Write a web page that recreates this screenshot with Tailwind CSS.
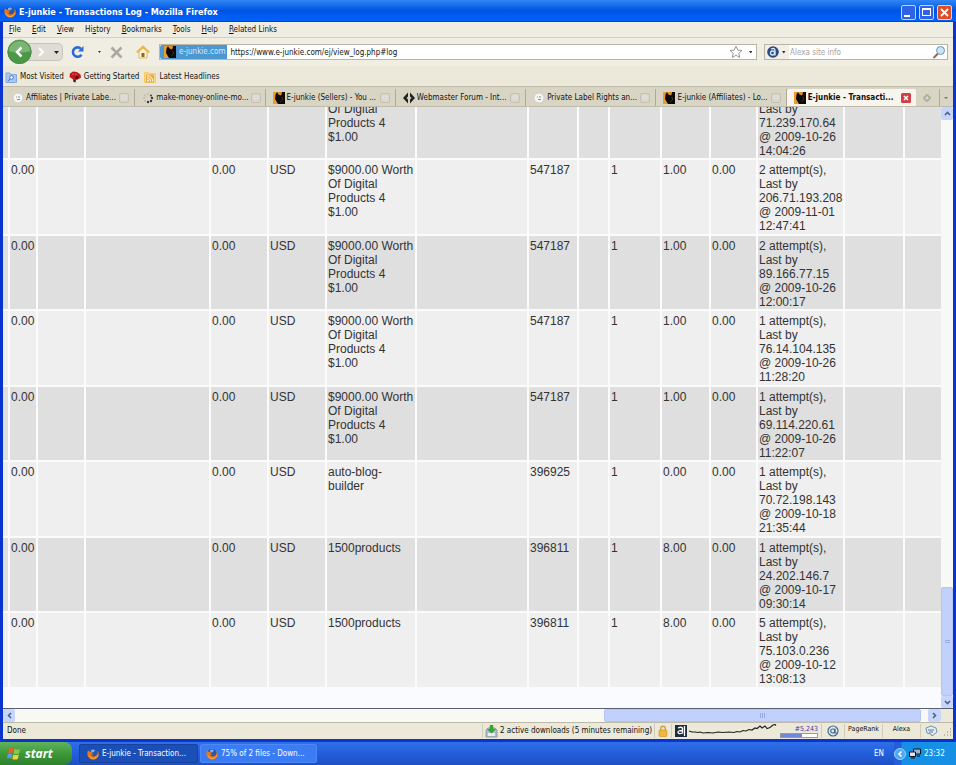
<!DOCTYPE html>
<html lang="en">
<head>
  <meta charset="UTF-8">
  <title>E-junkie - Transactions Log - Mozilla Firefox</title>
  <meta name="viewport" content="width=device-width, initial-scale=1.0">
  <script src="https://cdn.jsdelivr.net/npm/@tailwindcss/browser@4"></script>
</head>
<body class="h-screen flex flex-col overflow-hidden bg-[#f9fafb] font-['DejaVu_Sans_Condensed','Liberation_Sans',sans-serif] text-[8px] leading-[12px] text-[#111]">
  <!-- shared icons -->
  <svg class="hidden" aria-hidden="true">
    <symbol id="fox" viewBox="0 0 12 12">
      <circle cx="6" cy="6" r="5" fill="#2b55a8"/>
      <path d="M4 2.2c1.500-.9 3-.7 4 .2L6.500 4.300 4.200 4.500z" fill="#7fb2ea"/>
      <path d="M1 2.200C.2 4 0 6.500 1 8.500c1 2 3 3.200 5.200 3.200 3 0 5.500-2.200 5.600-5.400 0-1.500-.4-2.800-1.300-3.800.3 1.500.2 3-.6 4.300-1 1.500-3 2-4.500 1.200-.8-.4-1-.9-1.100-1.300.9.300 1.500 0 2-.6-.7-.2-1.500-.3-1.700-1-.1-.5.3-.9.800-1.300-.8-.3-1.600-.2-2.200.2C2.300 3.500 1.500 3 1 2.200z" fill="#e8741c"/>
      <path d="M2 7.500c.8 2 2.600 3 4.400 3 2 0 3.800-1.300 4.400-3.200" fill="none" stroke="#f9b63a"/>
    </symbol>
    <symbol id="ej" viewBox="0 0 12 12">
      <path d="M0 0h12v12H0z" fill="#ee9a2c"/>
      <path d="M2.500 2.500L4 0l1.500 2.500L8 3.500 9 0h3v12H5L3.500 9.500 2 7z" fill="#0c0a08"/>
      <path d="M6 0h2.500v2.500L7 3z" fill="#d98a2a"/>
      <path d="M8.500 5q1.500 1 1 3l-2 1.500" fill="none" stroke="#4a3820"/>
    </symbol>
    <symbol id="page" viewBox="0 0 12 12">
      <circle cx="6" cy="6" r="5" fill="#f6f6f4" stroke="#d0cfca"/>
      <path d="M4 5h1M6 5h2M5 7.500h3" stroke="#8c8c8c" fill="none"/>
    </symbol>
    <symbol id="shut" viewBox="0 0 10 10">
      <rect x=".5" y=".5" width="9" height="9" rx="1.500" fill="#d9d6cb" stroke="#c3c0b6"/>
      <path d="M3 3h4v3H3z" fill="none" stroke="#e6e4dc"/>
    </symbol>
  </svg>

  <div class="flex-1 min-h-0 flex flex-col border-x-3 border-b-3 border-[#0a34d0] bg-[#ece9d8]">
    <!-- title bar -->
    <header class="h-[22px] shrink-0 -mx-[3px] px-[4px] pt-[3px] flex items-center gap-[3px] bg-linear-to-b from-[#2f86f2] via-[#0054e3] to-[#0062fb] border-b border-[#0a3fc0]">
      <svg class="w-3 h-3"><use href="#fox"/></svg>
      <h1 class="flex-1 text-[9px] font-bold text-white whitespace-nowrap">E-junkie - Transactions Log - Mozilla Firefox</h1>
      <button aria-label="Minimize" class="w-[15px] h-[15px] rounded-xs border border-[#c3d4fa] bg-[#2f62e4] flex items-end p-[2px]"><span class="w-[6px] h-[2px] bg-white"></span></button>
      <button aria-label="Maximize" class="w-[15px] h-[15px] rounded-xs border border-[#c3d4fa] bg-[#2f62e4] flex items-center justify-center"><span class="w-[9px] h-[8px] border border-t-2 border-white"></span></button>
      <button aria-label="Close" class="w-[15px] h-[15px] rounded-xs border border-[#f3d0c8] bg-[#dd4f2b] flex items-center justify-center">
        <svg class="w-[9px] h-[9px]" viewBox="0 0 9 9"><path d="M1 1l7 7M8 1l-7 7" stroke="#fff" stroke-width="1.800"/></svg>
      </button>
    </header>

    <!-- menu -->
    <nav class="h-[16px] shrink-0 flex items-center gap-[11px] pl-[6px] pt-[1px] bg-[#efece2] border-b border-[#d3d0c2]">
      <a href="#"><u>F</u>ile</a>
      <a href="#"><u>E</u>dit</a>
      <a href="#"><u>V</u>iew</a>
      <a href="#">Hi<u>s</u>tory</a>
      <a href="#"><u>B</u>ookmarks</a>
      <a href="#"><u>T</u>ools</a>
      <a href="#"><u>H</u>elp</a>
      <a href="#"><u>R</u>elated Links</a>
    </nav>

    <!-- navigation -->
    <div class="h-[28px] shrink-0 flex items-center pl-[4px] pr-[5px] bg-[#f0eee2]">
      <button aria-label="Back and forward" class="shrink-0">
        <svg class="w-[56px] h-[26px]" viewBox="0 0 56 26">
          <path d="M12 4.500h38q5.500 0 5.500 5v7q0 5-5.500 5H12z" fill="#dedcd5" stroke="#c5c3ba"/>
          <path d="M32 9l4 4-4 4" fill="none" stroke="#fff" stroke-width="2"/>
          <path d="M47 12h5l-2.500 3z" fill="#222"/>
          <circle cx="12.500" cy="13" r="12" fill="#4a9a45"/>
          <path d="M1 12a11.500 11.500 0 0 1 23 0q-11 3-23 0z" fill="#79b573"/>
          <circle cx="12.500" cy="13" r="11.500" fill="none" stroke="#4f8a4d"/>
          <path d="M14.500 8.500L10 13l4.500 4.500" fill="none" stroke="#fff" stroke-width="2.500"/>
        </svg>
      </button>
      <button aria-label="Reload" class="ml-[7px] shrink-0">
        <svg class="w-[32px] h-[14px]" viewBox="0 0 32 14">
          <path d="M11.500 9.800A4.700 4.700 0 1 1 11 3.800" fill="none" stroke="#2c6bd4" stroke-width="2.600"/>
          <path d="M13.500 1v5.500H8z" fill="#2c6bd4"/>
          <path d="M28 6h3l-1.500 2z" fill="#333"/>
        </svg>
      </button>
      <button aria-label="Stop" class="ml-[8px] shrink-0">
        <svg class="w-[13px] h-[13px]" viewBox="0 0 13 13"><path d="M1.500 1.500l10 10M11.500 1.500l-10 10" stroke="#aaa9a4" stroke-width="2.600"/></svg>
      </button>
      <button aria-label="Home" class="ml-[13px] shrink-0">
        <svg class="w-[14px] h-[14px]" viewBox="0 0 14 14">
          <path d="M3 6.500v6.500h8V6.500L7 3z" fill="#fdf6dc" stroke="#e0b765"/>
          <path d="M.8 7.500L7 1.500l6.200 6" fill="none" stroke="#efb73e" stroke-width="1.800"/>
          <path d="M5.500 8h3v4h-3z" fill="#8a6428"/>
        </svg>
      </button>
      <div class="ml-[9px] flex-1 h-[16px] flex items-center bg-white border border-[#b9b6a6] pr-[4px]">
        <span class="h-full shrink-0 flex items-center gap-[3px] pl-[4px] pr-[2px] bg-[#4a97d2] text-[#d8ecfb] rounded-l-xs">
          <svg class="w-3 h-3"><use href="#ej"/></svg>e-junkie.com
        </span>
        <input aria-label="Location" value="https://www.e-junkie.com/ej/view_log.php#log" class="flex-1 min-w-0 pl-[3px] pt-[1px] outline-none">
        <svg class="w-[24px] h-[14px] shrink-0" viewBox="0 0 24 14">
          <path d="M8 1.200l1.800 3.900 4.200.4-3.200 2.800 1 4.200L8 10.300l-3.800 2.200 1-4.200L2 5.500l4.200-.4z" fill="#fff" stroke="#8c8c8c" stroke-width=".9"/>
          <path d="M21 6h3.500l-1.800 2.500z" fill="#333"/>
        </svg>
      </div>
      <div class="ml-[7px] w-[184px] shrink-0 h-[16px] flex items-center bg-white border border-[#b9b6a6] pr-[1px]">
        <svg class="w-[24px] h-[14px] shrink-0 bg-[#f1efe6]" viewBox="0 0 24 14">
          <circle cx="8" cy="7" r="5.800" fill="#2a4a84"/>
          <circle cx="7.500" cy="8" r="2" fill="none" stroke="#dfe8f6" stroke-width="1.300"/>
          <path d="M6 4q4-1.500 4 1.500v5" fill="none" stroke="#dfe8f6" stroke-width="1.300"/>
          <path d="M17 6h3.500l-1.700 2.500z" fill="#333"/>
        </svg>
        <input aria-label="Search" placeholder="Alexa site info" class="flex-1 min-w-0 pl-[1px] pt-[1px] outline-none placeholder:text-[#a3a3a3]">
        <svg class="w-[14px] h-[14px] shrink-0" viewBox="0 0 14 14">
          <path d="M6 8.500L1.500 13" stroke="#8c6a4c" stroke-width="2"/>
          <circle cx="8.500" cy="5.500" r="4" fill="#c9e5f8" stroke="#6c93b8"/>
        </svg>
      </div>
    </div>

    <!-- bookmarks -->
    <div class="h-[20px] shrink-0 flex items-center gap-[5px] pl-[2px] pt-[2px] bg-[#ece9db]">
      <a href="#" class="flex items-center gap-[3px]">
        <svg class="w-[12px] h-[12px]" viewBox="0 0 12 12"><path d="M1 2h4l1 1.500h5.500v8H1z" fill="#a9c6f2" stroke="#86a8e0"/><circle cx="6.500" cy="6.500" r="1.800" fill="#fff" stroke="#4c74bd"/><path d="M5 8l-2 2" stroke="#4c74bd"/></svg>
        Most Visited
      </a>
      <a href="#" class="flex items-center gap-[3px]">
        <svg class="w-[12px] h-[12px]" viewBox="0 0 12 12"><path d="M1 2.500L4 .5l4 .5 3.500 2.500.5 3L9 8.500 6 9 3.500 8 .5 6z" fill="#c0161c"/><path d="M7 5l3 .5L8.500 8 6 8z" fill="#5c0a0c"/><path d="M4 8l3 1-.5 2.500-2-.5z" fill="#3a2020"/><path d="M3 3l2 .5M6 3l2 .5" stroke="#e2565a"/></svg>
        Getting Started
      </a>
      <a href="#" class="flex items-center gap-[3px]">
        <svg class="w-[12px] h-[12px]" viewBox="0 0 12 12"><path d="M.5 1.500h4l1 1h6v9H.5z" fill="#f8d984" stroke="#f0cd70"/><path d="M2 3.500h8v8H2z" fill="#f0a93a"/><circle cx="4" cy="9.500" r="1" fill="#fff"/><path d="M3 7a3 3 0 0 1 3.500 3.500M3 4.800a5.200 5.200 0 0 1 5.700 5.700" fill="none" stroke="#fff"/></svg>
        Latest Headlines
      </a>
    </div>

    <!-- tabs -->
    <div class="h-[21px] shrink-0 flex items-stretch pl-[2px] pt-[2px] bg-[#d9d5c5] border-y border-[#bfbbaa]">
      <button class="flex-1 min-w-0 flex items-center gap-[2px] pl-[7px] pr-[5px] border-r border-[#aeaa9b]">
        <svg class="w-3 h-3 shrink-0"><use href="#page"/></svg><span class="flex-1 text-left whitespace-nowrap">Affiliates | Private Labe...</span><svg class="w-[10px] h-[10px] shrink-0"><use href="#shut"/></svg>
      </button>
      <button class="flex-1 min-w-0 flex items-center gap-[2px] pl-[7px] pr-[5px] border-r border-[#aeaa9b]">
        <svg class="w-3 h-3 shrink-0" viewBox="0 0 12 12"><g fill="#bdb9ab"><circle cx="6" cy="2" r="1"/><circle cx="3" cy="3.500" r="1"/><circle cx="2" cy="6" r="1"/><circle cx="3" cy="9" r="1"/></g><g fill="#3c3a35"><circle cx="9" cy="3.500" r="1"/><circle cx="10" cy="6" r="1.200"/><circle cx="9" cy="9" r="1.200"/><circle cx="6" cy="10" r="1.200"/></g></svg><span class="flex-1 text-left whitespace-nowrap">make-money-online-mo...</span><svg class="w-[10px] h-[10px] shrink-0"><use href="#shut"/></svg>
      </button>
      <button class="flex-1 min-w-0 flex items-center gap-[2px] pl-[7px] pr-[5px] border-r border-[#aeaa9b]">
        <svg class="w-3 h-3 shrink-0"><use href="#ej"/></svg><span class="flex-1 text-left whitespace-nowrap">E-junkie (Sellers) - You ...</span><svg class="w-[10px] h-[10px] shrink-0"><use href="#shut"/></svg>
      </button>
      <button class="flex-1 min-w-0 flex items-center gap-[2px] pl-[7px] pr-[5px] border-r border-[#aeaa9b]">
        <svg class="w-3 h-3 shrink-0" viewBox="0 0 12 12"><path d="M5 .5v11L0 6zM7 .5v11L12 6z" fill="#222"/><path d="M6 3.500L8.500 6 6 8.500 3.500 6z" fill="#d9d5c5"/></svg><span class="flex-1 text-left whitespace-nowrap">Webmaster Forum - Int...</span><svg class="w-[10px] h-[10px] shrink-0"><use href="#shut"/></svg>
      </button>
      <button class="flex-1 min-w-0 flex items-center gap-[2px] pl-[7px] pr-[5px] border-r border-[#aeaa9b]">
        <svg class="w-3 h-3 shrink-0"><use href="#page"/></svg><span class="flex-1 text-left whitespace-nowrap">Private Label Rights an...</span><svg class="w-[10px] h-[10px] shrink-0"><use href="#shut"/></svg>
      </button>
      <button class="flex-1 min-w-0 flex items-center gap-[2px] pl-[7px] pr-[5px] border-r border-[#aeaa9b]">
        <svg class="w-3 h-3 shrink-0"><use href="#ej"/></svg><span class="flex-1 text-left whitespace-nowrap">E-junkie (Affiliates) - Lo...</span><svg class="w-[10px] h-[10px] shrink-0"><use href="#shut"/></svg>
      </button>
      <button class="flex-1 min-w-0 flex items-center gap-[2px] pl-[7px] pr-[5px] rounded-t-xs bg-[#f7f5ee] font-bold">
        <svg class="w-3 h-3 shrink-0"><use href="#ej"/></svg><span class="flex-1 text-left whitespace-nowrap">E-junkie - Transacti...</span>
        <svg class="w-[10px] h-[10px] shrink-0" viewBox="0 0 10 10"><rect width="10" height="10" rx="1.500" fill="#cf3f45"/><path d="M3 3l4 4M7 3l-4 4" stroke="#fff" stroke-width="1.500"/></svg>
      </button>
      <button aria-label="New tab" class="w-[24px] flex items-center justify-center border-r border-[#aeaa9b]">
        <svg class="w-[8px] h-[8px]" viewBox="0 0 8 8"><path d="M4 .5v7M.5 4h7" stroke="#99968a" stroke-width="3"/><path d="M4 1.500v5M1.500 4h5" stroke="#eeece4"/></svg>
      </button>
      <button aria-label="List all tabs" class="w-[13px] flex items-center justify-center">
        <svg class="w-[6px] h-[4px]" viewBox="0 0 6 4"><path d="M1 1h4L3 3z" fill="#77746a"/></svg>
      </button>
    </div>

    <!-- page, scrolled to its end -->
    <div class="flex-1 min-h-0 flex">
      <main class="flex-1 min-w-0 flex flex-col justify-end overflow-hidden bg-[#f9fbfe] pb-[19px]">
        <table class="w-full table-fixed border-separate border-spacing-0 bg-[#fbfbfb] font-['Liberation_Sans',Arial,sans-serif] text-[12px] leading-[14px] text-[#333]">
          <colgroup>
            <col class="w-[7px]"><col class="w-[28px]"><col class="w-[48px]"><col class="w-[125px]">
            <col class="w-[58px]"><col class="w-[58px]"><col class="w-[90px]"><col class="w-[112px]">
            <col class="w-[50px]"><col class="w-[31px]"><col class="w-[52px]"><col class="w-[49px]">
            <col class="w-[47px]"><col class="w-[87px]"><col class="w-[60px]"><col>
          </colgroup>
          <tbody id="log"></tbody>
        </table>
      </main>
      <div class="w-[12px] shrink-0 flex flex-col bg-[#f8f8f4]">
        <button aria-label="Scroll up" class="h-[13px] flex items-center justify-center bg-[#c6d5fb] rounded-xs"><svg class="w-[7px] h-[5px]" viewBox="0 0 7 5"><path d="M1 4l2.500-2.500L6 4" fill="none" stroke="#4d6185" stroke-width="1.600"/></svg></button>
        <div class="flex-1"></div>
        <div class="h-[109px] bg-[#c2d1fc] border border-[#b3c5f5] rounded-xs flex flex-col items-center justify-center gap-px"><i class="w-[5px] h-px bg-[#93abe8]"></i><i class="w-[5px] h-px bg-[#93abe8]"></i></div>
        <button aria-label="Scroll down" class="h-[12px] flex items-center justify-center bg-[#c6d5fb] rounded-xs"><svg class="w-[7px] h-[5px]" viewBox="0 0 7 5"><path d="M1 1l2.500 2.500L6 1" fill="none" stroke="#4d6185" stroke-width="1.600"/></svg></button>
      </div>
    </div>

    <div class="h-[14px] shrink-0 flex border-t border-[#59606e] bg-[#f9f9f3]">
      <button aria-label="Scroll left" class="w-[12px] flex items-center justify-center bg-[#c6d5fb] rounded-xs"><svg class="w-[5px] h-[7px]" viewBox="0 0 5 7"><path d="M4 1L1.500 3.500 4 6" fill="none" stroke="#4d6185" stroke-width="1.600"/></svg></button>
      <div class="flex-1"></div>
      <div class="w-1/3 bg-[#c2d1fc] border border-[#b3c5f5] rounded-xs flex items-center justify-center gap-px"><i class="h-[5px] w-px bg-[#93abe8]"></i><i class="h-[5px] w-px bg-[#93abe8]"></i><i class="h-[5px] w-px bg-[#93abe8]"></i></div>
      <button aria-label="Scroll right" class="ml-[7px] w-[13px] flex items-center justify-center bg-[#c6d5fb] rounded-xs"><svg class="w-[5px] h-[7px]" viewBox="0 0 5 7"><path d="M1 1l2.500 2.500L1 6" fill="none" stroke="#4d6185" stroke-width="1.600"/></svg></button>
      <span class="w-[12px] bg-[#ece9d8]"></span>
    </div>

    <!-- status bar -->
    <footer class="h-[17px] shrink-0 flex items-center pl-[4px] border-t border-[#bcb9aa] bg-[#ece9d8] whitespace-nowrap">
      <span class="flex-1">Done</span>
      <div class="flex items-center gap-[2px] h-[14px] px-[2px] border-l border-[#cfccbc]">
        <svg class="w-[13px] h-[13px]" viewBox="0 0 13 13"><path d="M1 5l2-2h7l2 2v7H1z" fill="#aebccb" stroke="#8f9cac"/><path d="M3 8h7v3H3z" fill="#e8eef5"/><path d="M4.800 0h3.400v4H11L6.500 8.500 2 4h2.800z" fill="#37a52e"/></svg>
        <span>2 active downloads (5 minutes remaining)</span>
      </div>
      <div class="flex items-center h-[14px] px-[3px] border-x border-[#cfccbc]">
        <svg class="w-[10px] h-[12px]" viewBox="0 0 10 12"><path d="M2.700 6V3.500a2.300 2.300 0 0 1 4.600 0V6" fill="none" stroke="#c9a24a" stroke-width="1.400"/><rect x="1" y="5" width="8" height="6.500" rx="1" fill="#f0b63e" stroke="#c98f26" stroke-width=".6"/></svg>
      </div>
      <svg class="ml-[3px] w-[104px] h-[14px]" viewBox="0 0 104 14">
        <path d="M0 1h12v12H0z" fill="#1f2c40"/>
        <path d="M3 4q3-1.500 4.500 0v5q-4 1.500-4.500-.5t4.500-2M9.500 2v10" fill="none" stroke="#fff" stroke-width="1.300"/>
        <path d="M14 7l3 1h3l3 .5 2-.5 3 1 5-.5 5 .5 5-1 5 .5 6-.5 5 .5 3-1 3 .500 3-1.500 3 .500 3-1.500 3 .500 3-2 2 .500 3-2.500 2 2 3-2 2 2.500 3-1 3-2.500 2-.5 1 1" fill="none" stroke="#222" stroke-width="1.200"/>
      </svg>
      <div class="w-[40px] flex flex-col items-end pr-[1px] leading-[8px] text-[7px] text-[#2c3fa8]">
        <a href="#">#5,243</a>
        <span class="w-[38px] h-[5px] border border-[#9c9a90] bg-white"><i class="block h-full w-[21px] bg-[#7288dd]"></i></span>
      </div>
      <div class="ml-[2px] px-[5px] h-[14px] flex items-center border-x border-[#cfccbc]">
        <svg class="w-[12px] h-[12px]" viewBox="0 0 12 12"><circle cx="6" cy="6" r="5" fill="#dfe8ef" stroke="#426a8c" stroke-width="1.200"/><circle cx="5.700" cy="6" r="2" fill="none" stroke="#426a8c" stroke-width="1.200"/><path d="M8 3.500v4.500h2" fill="none" stroke="#426a8c" stroke-width="1.200"/></svg>
      </div>
      <span class="h-[14px] px-[3px] text-[7px] leading-[11px] border-r border-[#cfccbc]">PageRank</span>
      <span class="h-[14px] w-[38px] text-center text-[7px] leading-[11px] border-r border-[#cfccbc]">Alexa</span>
      <svg class="ml-[4px] w-[28px] h-[14px]" viewBox="0 0 28 14">
        <path d="M1 4l5-2 5 2 1 4-5 4-1-2-4-1z" fill="#e3edf5" stroke="#7191b0"/><path d="M3 6h6M4 8h4" stroke="#55789c"/>
        <path d="M25 5h1M25 8h1M25 11h1M22 8h1M22 11h1M19 11h1" stroke="#aaa798" stroke-width="1.500"/>
      </svg>
    </footer>
  </div>

  <!-- taskbar -->
  <div class="h-[23px] shrink-0 flex items-stretch text-white bg-linear-to-b from-[#2f6fe8] via-[#245edb] to-[#1e50c4] whitespace-nowrap">
    <button class="w-[72px] flex items-center gap-[4px] pl-[7px] rounded-r-lg bg-linear-to-b from-[#62b25e] via-[#3c9838] to-[#2f802d] font-['Open_Sans','Liberation_Sans',sans-serif] text-[12px] font-bold italic">
      <svg class="w-[14px] h-[13px]" viewBox="0 0 14 13"><path d="M2 1.500q2.500-1.500 4.500 0L5.500 6Q3.500 4.800 1 6z" fill="#e8602c"/><path d="M7.500 2q2.500 1.200 5.500 0l-1 4.500q-3 1.200-5.500 0z" fill="#8cc94a"/><path d="M.8 7q2.500-1.200 4.500 0l-1 4.500q-2-1.200-4.300 0z" fill="#5b9bea"/><path d="M6.300 7.500q2.500 1.200 5.500 0l-1 4.500q-3 1.200-5.500 0z" fill="#f7cf3c"/></svg>
      start
    </button>
    <button class="ml-[7px] my-[2px] w-[119px] flex items-center gap-[3px] pl-[7px] rounded-xs bg-[#1b4fb8] border border-[#1841a0]">
      <svg class="w-3 h-3 shrink-0"><use href="#fox"/></svg>E-junkie - Transaction...
    </button>
    <button class="ml-[2px] my-[2px] w-[117px] flex items-center gap-[3px] pl-[5px] rounded-xs bg-[#3b7bf3] border border-[#4c88f6]">
      <svg class="w-3 h-3 shrink-0"><use href="#fox"/></svg>75% of 2 files - Down...
    </button>
    <div class="flex-1"></div>
    <span class="self-center mr-[10px]">EN</span>
    <div class="w-[62px] flex items-center gap-[3px] bg-linear-to-r from-[#245edb] from-[7px] to-[#1590e4] to-[8px]">
      <svg class="w-[12px] h-[12px]" viewBox="0 0 12 12"><circle cx="6" cy="6" r="5.500" fill="#4fa9f4" stroke="#9fd2fb"/><path d="M7.500 3.500L5 6l2.500 2.500" fill="none" stroke="#fff" stroke-width="1.600"/></svg>
      <svg class="w-[12px] h-[11px]" viewBox="0 0 12 11"><path d="M4.500 1h7v5h-7z" fill="#9bb4d4" stroke="#111"/><path d="M.5 4h6v4.500h-6z" fill="#dce6f2" stroke="#111"/><path d="M2 10h4M8 8h3" stroke="#111"/></svg>
      <time>23:32</time>
    </div>
  </div>

  <script>
    const worth = '$9000.00 Worth Of Digital Products 4 $1.00';
    const rows = [
      [worth, '547187', '1.00', '2', '206.71.193.208', '2009-11-01 12:47:41'],
      [worth, '547187', '1.00', '2', '89.166.77.15', '2009-10-26 12:00:17'],
      [worth, '547187', '1.00', '1', '76.14.104.135', '2009-10-26 11:28:20'],
      [worth, '547187', '1.00', '1', '69.114.220.61', '2009-10-26 11:22:07'],
      ['auto-blog-builder', '396925', '0.00', '1', '70.72.198.143', '2009-10-18 21:35:44'],
      ['1500products', '396811', '8.00', '1', '24.202.146.7', '2009-10-17 09:30:14'],
      ['1500products', '396811', '8.00', '5', '75.103.0.236', '2009-10-12 13:08:13']
    ].map(([item, id, amount, tries, ip, date]) => [
      '', '0.00', '', '', '0.00', 'USD', item, '', id, '', '1', amount, '0.00',
      `${tries} attempt(s),<br>Last by<br>${ip}<br>@ ${date}`, '', ''
    ]);

    // top row is mostly scrolled away, its first line is left empty
    rows.unshift(['', '', '', '', '', '', '<br>Of Digital Products 4 $1.00', '', '', '', '', '', '',
      '<br>Last by<br>71.239.170.64<br>@ 2009-10-26 14:04:26', '', '']);

    document.getElementById('log').innerHTML = rows.map(cells =>
      '<tr class="h-[75px] even:h-[76px] odd:bg-[#dfdfdf] even:bg-[#efefef]">' +
      cells.map(c => `<td class="align-top pt-[3px] pl-[1px] border-r-2 border-b-2 border-[#fbfbfb] last:border-r-0">${c}</td>`).join('') + '</tr>'
    ).join('');
  </script>
</body>
</html>
